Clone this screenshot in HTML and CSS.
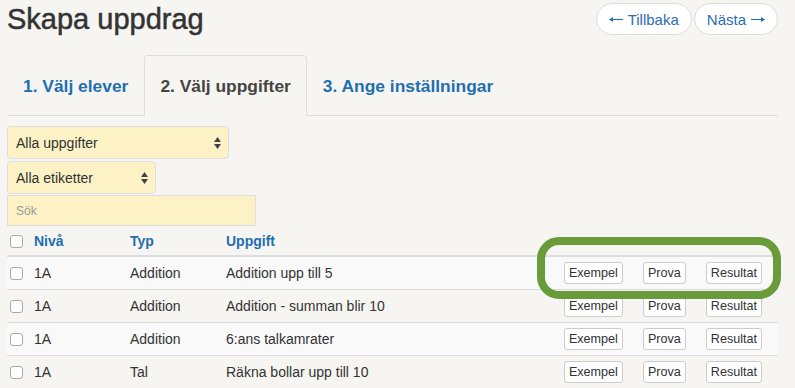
FILE: index.html
```html
<!DOCTYPE html>
<html lang="sv">
<head>
    <meta charset="UTF-8">
    <meta name="viewport" content="width=device-width, initial-scale=1.0">
    <title>Skapa uppdrag</title>
    <link rel="stylesheet" href="styles.css">
</head>
<body>

    <div class="page">
        <!-- Header -->
        <div class="page-header">
            <h1>Skapa uppdrag</h1>
            <div class="pager">
                <a href="#" class="pager-btn">
                    <svg class="arrow" width="14" height="9" viewBox="0 0 14 9"><path d="M2 4.5H14" stroke="#2a6db3" stroke-width="1.1"/><path d="M0 4.5L4 2V7Z" fill="#2a6db3"/></svg>
                    Tillbaka
                </a>
                <a href="#" class="pager-btn">
                    Nästa
                    <svg class="arrow" width="14" height="9" viewBox="0 0 14 9"><path d="M0 4.5H12" stroke="#2a6db3" stroke-width="1.1"/><path d="M14 4.5L10 2V7Z" fill="#2a6db3"/></svg>
                </a>
            </div>
        </div>

        <!-- Steps -->
        <ul class="tabs">
            <li><a href="#">1. Välj elever</a></li>
            <li class="active"><a href="#">2. Välj uppgifter</a></li>
            <li><a href="#">3. Ange inställningar</a></li>
        </ul>

        <!-- Filters -->
        <div class="filters">
            <div class="select select-wide">
                <span>Alla uppgifter</span>
                <svg class="arrows" width="7" height="12" viewBox="0 0 7 12"><path d="M3.5 0L7 5H0Z M3.5 12L7 7H0Z" fill="#444"/></svg>
            </div>
            <div class="select select-narrow">
                <span>Alla etiketter</span>
                <svg class="arrows" width="7" height="12" viewBox="0 0 7 12"><path d="M3.5 0L7 5H0Z M3.5 12L7 7H0Z" fill="#444"/></svg>
            </div>
            <input type="text" class="search" placeholder="Sök">
        </div>

        <!-- Task list -->
        <div class="table-wrap">
            <table class="tasks">
                <thead>
                    <tr>
                        <th class="col-check"><span class="checkbox"></span></th>
                        <th class="col-level">Nivå</th>
                        <th class="col-type">Typ</th>
                        <th>Uppgift</th>
                        <th></th>
                    </tr>
                </thead>
                <tbody id="taskRows">
                </tbody>
            </table>
            <!-- highlight marker -->
            <div class="highlight"></div>
        </div>
    </div>

    <script>
        const tasks = [
            { level: '1A', type: 'Addition', name: 'Addition upp till 5' },
            { level: '1A', type: 'Addition', name: 'Addition - summan blir 10' },
            { level: '1A', type: 'Addition', name: '6:ans talkamrater' },
            { level: '1A', type: 'Tal', name: 'Räkna bollar upp till 10' }
        ];

        const taskRows = document.getElementById('taskRows');
        tasks.forEach(task => {
            const row = document.createElement('tr');
            row.innerHTML = `
                <td class="col-check"><span class="checkbox"></span></td>
                <td>${task.level}</td>
                <td>${task.type}</td>
                <td>${task.name}</td>
                <td class="actions">
                    <div class="action-group">
                        <button>Exempel</button>
                        <button>Prova</button>
                        <button>Resultat</button>
                    </div>
                </td>
            `;
            taskRows.appendChild(row);
        });
    </script>

</body>
</html>
```

FILE: styles.css
```css
body {
    font-family: 'Helvetica Neue', 'Liberation Sans', Arial, sans-serif;
    background-color: #f6f5f1;
    color: #333;
    margin: 0;
    padding: 0;
}

.page {
    padding: 3px 17px 0 7px;
}

.page-header {
    display: flex;
    justify-content: space-between;
    align-items: flex-start;
    height: 52px;
}

.page-header h1 {
    margin: 0;
    padding-top: 1px;
    font-size: 29px;
    font-weight: normal;
    -webkit-text-stroke: 0.5px #333;
    color: #333;
    line-height: 30px;
}

.pager {
    display: flex;
    gap: 2px;
}

.pager-btn {
    display: flex;
    align-items: center;
    gap: 5px;
    height: 30px;
    padding: 0 12px;
    background-color: #fff;
    border: 1px solid #ddd;
    border-radius: 16px;
    color: #2a6db3;
    font-size: 15px;
    text-decoration: none;
}

.pager-btn .arrow {
    margin-top: 1px;
}

.tabs {
    display: flex;
    margin: 0;
    padding: 0;
    list-style: none;
    border-bottom: 1px solid #ddd;
}

.tabs li {
    margin-bottom: -1px;
}

.tabs a {
    display: block;
    padding: 20px 15px 19px 15px;
    border: 1px solid transparent;
    border-radius: 4px 4px 0 0;
    font-size: 17.4px;
    font-weight: bold;
    line-height: 20px;
    color: #1f6fb0;
    text-decoration: none;
}

.tabs li.active a {
    color: #444;
    background-color: #f6f5f1;
    border-color: #ddd;
    border-bottom-color: #f6f5f1;
}

.filters {
    display: flex;
    flex-direction: column;
    align-items: flex-start;
    margin-top: 10px;
}

.select {
    display: flex;
    justify-content: space-between;
    align-items: center;
    box-sizing: border-box;
    height: 33px;
    padding: 0 7px 0 8px;
    background-color: #fcf2c5;
    border: 1px solid #ddd;
    border-radius: 4px;
    font-size: 14px;
    color: #333;
}

.select-wide {
    width: 222px;
}

.select-narrow {
    width: 149px;
    margin-top: 2px;
}

.search {
    box-sizing: border-box;
    width: 249px;
    height: 31px;
    margin: 1px 0 0 0;
    padding: 0 8px;
    background-color: #fcf2c5;
    border: 1px solid #ddd;
    border-radius: 0;
    font-family: inherit;
    font-size: 12px;
}

.search::placeholder {
    color: #999;
}

.table-wrap {
    position: relative;
    margin-top: 3px;
}

.tasks {
    width: 100%;
    border-collapse: collapse;
    font-size: 14px;
}

.tasks th {
    text-align: left;
    font-weight: bold;
    color: #1f6fb0;
    padding: 5px 0 7px 0;
    border-bottom: 2px solid #ddd;
    line-height: 14px;
}

.tasks td {
    height: 32px;
    padding: 0;
    border-top: 1px solid #ddd;
    vertical-align: middle;
}

.tasks tbody tr:nth-child(odd) {
    background-color: #f9f9f9;
}

.tasks .col-check {
    width: 27px;
    padding-left: 3px;
    box-sizing: border-box;
}

.tasks .col-level,
.tasks .col-type {
    width: 96px;
}

.checkbox {
    display: block;
    width: 11px;
    height: 11px;
    background-color: #fff;
    border: 1px solid #aaa;
    border-radius: 3px;
}

.actions {
    text-align: right;
}

.action-group {
    display: flex;
    justify-content: flex-end;
    gap: 20px;
    padding-right: 16px;
}

.action-group button {
    height: 22px;
    padding: 0 4px;
    background-color: #fff;
    border: 1px solid #ccc;
    border-radius: 3px;
    font-family: inherit;
    font-size: 12.6px;
    color: #333;
}

.highlight {
    position: absolute;
    left: 530px;
    top: 8px;
    width: 228px;
    height: 46px;
    border: 8px solid #699b3a;
    border-radius: 22px;
    pointer-events: none;
}
```
